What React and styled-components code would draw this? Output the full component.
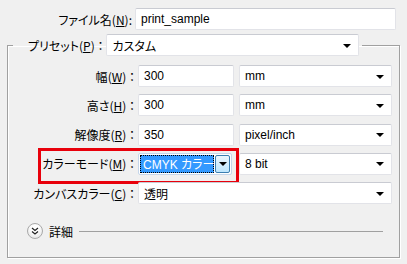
import styled, { createGlobalStyle } from "styled-components";

const GlobalStyle = createGlobalStyle`
  html, body {
    margin: 0;
    padding: 0;
    background: #f0f0f0;
  }
  body {
    font-family: "Noto Sans CJK JP", sans-serif;
    font-size: 12px;
    color: #000;
    font-feature-settings: "palt";
  }
`;

const Dialog = styled.div`
  width: 407px;
  height: 264px;
  padding-top: 8px;
  box-sizing: border-box;
  background: #f0f0f0;
  overflow: hidden;
`;

const TopRow = styled.div`
  display: flex;
  align-items: center;
  height: 22px;
`;

const Label = styled.label`
  width: ${(p) => p.width || 127}px;
  margin-right: 3px;
  text-align: right;
  white-space: nowrap;
  flex: 0 0 auto;
  u {
    text-decoration: underline;
    text-underline-offset: 1px;
  }
`;

const Field = styled.div`
  width: ${(p) => p.width}px;
  height: 22px;
  margin-right: ${(p) => p.gap || 0}px;
  box-sizing: border-box;
  display: flex;
  align-items: center;
  padding: 0 7px 0 5px;
  background: #fff;
  border: 1px solid #e2e3e8;
  border-top-color: #c9cbd2;
  border-radius: 2px;
  font-family: ${(p) =>
    p.jp ? '"Noto Sans CJK JP", sans-serif' : '"Liberation Sans", Arial, sans-serif'};
  font-size: 12px;
  white-space: nowrap;
  flex: 0 0 auto;
  span {
    flex: 1;
  }
`;

const Arrow = styled.i`
  width: 0;
  height: 0;
  border-left: 4px solid transparent;
  border-right: 4px solid transparent;
  border-top: 4px solid #000;
  margin-top: 1px;
`;

const Group = styled.fieldset`
  margin: 4px 0 0 7px;
  width: 393px;
  box-sizing: border-box;
  padding: 0 7px 18px 0;
  border: 1px solid #a0a0a0;
  box-shadow: inset 1px 1px 0 #fff, 1px 1px 0 #fff;
  min-width: 0;
`;

const Legend = styled.legend`
  width: 349px;
  box-sizing: border-box;
  margin-left: 5px;
  padding: 0 6px 0 4px;
  display: flex;
  align-items: center;
  ${Label} {
    width: auto;
    flex: 1;
    text-align: left;
    padding-left: 11px;
  }
`;

const Rows = styled.div`
  display: flex;
  flex-direction: column;
  gap: 7.25px;
  padding-top: 9px;
`;

const Row = styled.div`
  position: relative;
  display: flex;
  align-items: center;
  height: 22px;
`;

const RedBox = styled.div`
  position: absolute;
  left: 30px;
  top: -5px;
  width: 201px;
  height: 36px;
  box-sizing: border-box;
  border: 3px solid #e8000b;
  pointer-events: none;
`;

const Combo = styled.div`
  width: 94px;
  height: 22px;
  margin-right: 7px;
  box-sizing: border-box;
  display: flex;
  align-items: stretch;
  gap: 1px;
  padding: 1px;
  background: #fff;
  border: 1px solid #c5d6ea;
  border-radius: 2px;
  flex: 0 0 auto;
`;

const Selected = styled.div`
  flex: 1;
  display: flex;
  align-items: center;
  padding-left: 3px;
  background: #3399ff;
  color: #fff;
  outline: 1px dotted #000;
  outline-offset: -1px;
  font-family: "Liberation Sans", "Noto Sans CJK JP", sans-serif;
  font-size: 12px;
  white-space: nowrap;
`;

const DropButton = styled.div`
  width: 17px;
  display: flex;
  align-items: center;
  justify-content: center;
  border: 1px solid #3c7fb1;
  border-radius: 2px;
  background: linear-gradient(#eaf6fd, #bee6fd);
`;

const Details = styled.div`
  display: flex;
  align-items: center;
  margin-top: 19px;
  padding-left: 19px;
  height: 16px;
`;

const RoundButton = styled.div`
  width: 16px;
  height: 16px;
  box-sizing: border-box;
  border-radius: 50%;
  border: 1px solid #a9a9a9;
  background: radial-gradient(circle at 50% 35%, #ffffff 30%, #dedede 100%);
  display: flex;
  align-items: center;
  justify-content: center;
  margin-right: 6px;
`;

const Rule = styled.div`
  flex: 1;
  height: 1px;
  background: #a0a0a0;
  margin: 0 9px 0 6px;
`;

const Mn = ({ k }) => (
  <>
    (<u>{k}</u>)
  </>
);

const Select = ({ width, gap, jp, children }) => (
  <Field width={width} gap={gap} jp={jp}>
    <span>{children}</span>
    <Arrow />
  </Field>
);

const App = () => (
  <Dialog>
    <GlobalStyle />
    <TopRow>
      <Label width={132}>
        ファイル名<Mn k="N" />:
      </Label>
      <Field width={261}>print_sample</Field>
    </TopRow>

    <Group>
      <Legend>
        <Label>
          プリセット<Mn k="P" /> ：
        </Label>
        <Select width={253} jp>
          カスタム
        </Select>
      </Legend>

      <Rows>
        <Row>
          <Label>
            幅<Mn k="W" /> ：
          </Label>
          <Field width={96} gap={5}>300</Field>
          <Select width={153}>mm</Select>
        </Row>
        <Row>
          <Label>
            高さ<Mn k="H" /> ：
          </Label>
          <Field width={96} gap={5}>300</Field>
          <Select width={153}>mm</Select>
        </Row>
        <Row>
          <Label>
            解像度<Mn k="R" /> ：
          </Label>
          <Field width={96} gap={5}>350</Field>
          <Select width={153}>pixel/inch</Select>
        </Row>
        <Row>
          <RedBox />
          <Label>
            カラーモード<Mn k="M" /> ：
          </Label>
          <Combo>
            <Selected>CMYK カラー</Selected>
            <DropButton>
              <Arrow />
            </DropButton>
          </Combo>
          <Select width={153}>8 bit</Select>
        </Row>
        <Row>
          <Label>
            カンバスカラー<Mn k="C" /> ：
          </Label>
          <Select width={254} jp>
            透明
          </Select>
        </Row>
      </Rows>

      <Details>
        <RoundButton>
          <svg width="8" height="8" viewBox="0 0 8 8" fill="none" stroke="#222" strokeWidth="1.2">
            <path d="M1 1l3 2.5L7 1" />
            <path d="M1 4.5L4 7l3-2.5" />
          </svg>
        </RoundButton>
        <span>詳細</span>
        <Rule />
      </Details>
    </Group>
  </Dialog>
);

export default App;
